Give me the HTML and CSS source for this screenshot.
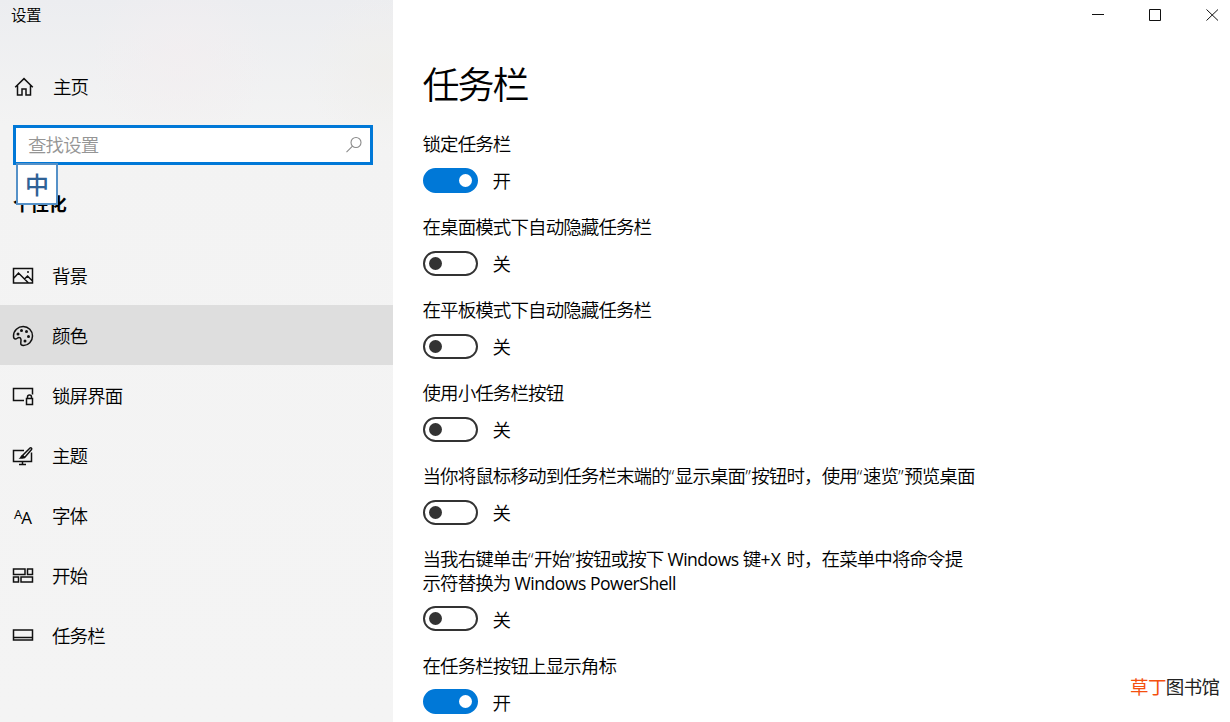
FILE: index.html
```html
<!DOCTYPE html>
<html lang="zh-CN">
<head>
    <meta charset="UTF-8">
    <meta name="viewport" content="width=device-width, initial-scale=1.0">
    <title>设置</title>
    <link rel="stylesheet" href="styles.css">
</head>
<body>
    <div class="window">
        <aside class="sidebar">
            <div class="app-title">设置</div>
            <a class="home">
                <svg class="icon" width="20" height="20" viewBox="0 0 20 20"><path d="M1.200 10.200L10 1.600l8.800 8.600M3.500 8.500v9.500h4.500v-6h4v6h4.500V8.500"/></svg>
                <span>主页</span>
            </a>
            <div class="search">
                <span class="placeholder">查找设置</span>
                <svg class="search-icon" width="18" height="18" viewBox="0 0 18 18"><circle cx="11" cy="6.500" r="5"/><path d="M7.500 10.200L1.500 16.200"/></svg>
                <div class="ime">中</div>
            </div>
            <h2 class="category">个性化</h2>
            <nav class="nav">
                <a class="nav-item">
                    <svg class="icon" width="22" height="18" viewBox="0 0 22 18"><path d="M1.500 1.500h19v14.500h-19zM1.500 11.500l5-5.500 10 10M12.500 12l3-3 5 5"/><circle class="solid" cx="16" cy="5" r="1"/></svg>
                    <span>背景</span>
                </a>
                <a class="nav-item active">
                    <svg class="icon" width="22" height="22" viewBox="0 0 22 22"><path d="M1.500 11C1.500 5.500 6 1.500 11.200 1.500s9.300 4.200 9.300 9.500-4.200 9.500-9 9.500c-2.200 0-3-1-2.700-3 .4-2.500.5-5-1.800-5-1.500 0-2 1.500-3.500 1.500-1.300 0-2-1.300-2-3z"/><g class="solid"><circle cx="6" cy="9" r="1.500"/><circle cx="9.500" cy="5.500" r="1.500"/><circle cx="14.500" cy="6.500" r="1.500"/><circle cx="16.500" cy="11.500" r="1.500"/><circle cx="13" cy="16" r="1.500"/></g></svg>
                    <span>颜色</span>
                </a>
                <a class="nav-item">
                    <svg class="icon" width="22" height="20" viewBox="0 0 22 20"><path d="M12 14.500H1.500v-12h19v6M14.500 12.500h6v6h-6zM15.500 12.500v-1.500a2 2 0 0 1 4 0v1.500"/></svg>
                    <span>锁屏界面</span>
                </a>
                <a class="nav-item">
                    <svg class="icon" width="22" height="20" viewBox="0 0 22 20"><path d="M12 4.500H1.500v11h18v-9M10.500 15.500v3M7 18.500h7"/><path d="M10.500 9.500l7.500-7.500c1-.8 2.300.3 1.500 1.500l-6.800 8z"/><path class="solid" d="M10.500 9c-2 .2-1.800 2.700-4 3.700h4c1.800 0 2.500-1 2.200-2z"/></svg>
                    <span>主题</span>
                </a>
                <a class="nav-item">
                    <span class="icon font-icon"><span class="small-a">A</span><span class="big-a">A</span></span>
                    <span>字体</span>
                </a>
                <a class="nav-item">
                    <svg class="icon" width="22" height="16" viewBox="0 0 22 16"><path d="M1.500 1h11.500v5.500h-11.500zM15.500 1h5v5.500h-5zM1.500 9h5v5h-5zM9 9h11.500v5h-11.500z"/></svg>
                    <span>开始</span>
                </a>
                <a class="nav-item">
                    <svg class="icon" width="22" height="14" viewBox="0 0 22 14"><path d="M1.500 1h19v10h-19zM1.500 8.500h19"/></svg>
                    <span>任务栏</span>
                </a>
            </nav>
        </aside>

        <main class="content">
            <div class="caption-buttons">
                <svg width="13" height="13" viewBox="0 0 13 13"><path d="M0 6.500h12"/></svg>
                <svg width="13" height="13" viewBox="0 0 13 13"><path d="M.5 1.500h11v11H.5z"/></svg>
                <svg width="13" height="13" viewBox="0 0 13 13"><path d="M.5 1.500l11.500 11M12 1.500L.5 12.500"/></svg>
            </div>
            <h1>任务栏</h1>

            <div class="setting">
                <div class="label">锁定任务栏</div>
                <div class="control"><span class="toggle on"></span><span class="state">开</span></div>
            </div>
            <div class="setting">
                <div class="label">在桌面模式下自动隐藏任务栏</div>
                <div class="control"><span class="toggle"></span><span class="state">关</span></div>
            </div>
            <div class="setting">
                <div class="label">在平板模式下自动隐藏任务栏</div>
                <div class="control"><span class="toggle"></span><span class="state">关</span></div>
            </div>
            <div class="setting">
                <div class="label">使用小任务栏按钮</div>
                <div class="control"><span class="toggle"></span><span class="state">关</span></div>
            </div>
            <div class="setting">
                <div class="label">当你将鼠标移动到任务栏末端的<span class="quote">“</span>显示桌面<span class="quote">”</span>按钮时，使用<span class="quote">“</span>速览<span class="quote">”</span>预览桌面</div>
                <div class="control"><span class="toggle"></span><span class="state">关</span></div>
            </div>
            <div class="setting">
                <div class="label">当我右键单击<span class="quote">“</span>开始<span class="quote">”</span>按钮或按下<span class="latin"> Windows </span>键<span class="latin key">+X </span>时，在菜单中将命令提<br>示符替换为<span class="latin"> Windows PowerShell</span></div>
                <div class="control"><span class="toggle"></span><span class="state">关</span></div>
            </div>
            <div class="setting">
                <div class="label">在任务栏按钮上显示角标</div>
                <div class="control"><span class="toggle on"></span><span class="state">开</span></div>
            </div>

            <div class="watermark"><span class="brand">草丁</span>图书馆</div>
        </main>
    </div>
</body>
</html>
```
FILE: styles.css
```css
* {
    box-sizing: border-box;
}

body {
    margin: 0;
    font-family: "Open Sans", "Noto Sans CJK SC", sans-serif;
    font-size: 18.5px;
    font-weight: 350;
    letter-spacing: -0.91px;
    line-height: 24px;
    color: #000;
    background: #fff;
}

.window {
    display: flex;
    height: 722px;
    overflow: hidden;
}

.sidebar {
    width: 393px;
    flex-shrink: 0;
    background:
        radial-gradient(circle at 180px 60px, rgba(243, 238, 240, 0.7), transparent 90px),
        radial-gradient(circle at 385px 70px, rgba(240, 239, 236, 0.8), transparent 80px),
        linear-gradient(#ecedf0, #f3f3f3 125px, #f4f4f4);
}

.app-title {
    height: 30px;
    padding-left: 11px;
    font-size: 15.5px;
    letter-spacing: -0.5px;
    line-height: 30px;
}

.home {
    display: flex;
    align-items: center;
    gap: 19px;
    height: 60px;
    margin-top: 27px;
    padding-left: 14px;
}

svg {
    fill: none;
    stroke: #111;
    stroke-width: 1.5;
}

.solid {
    fill: #111;
    stroke: none;
}

.search {
    position: relative;
    display: flex;
    align-items: center;
    justify-content: space-between;
    width: 360px;
    height: 40px;
    margin: 8px 0 0 13px;
    padding: 0 7px 0 12px;
    border: 3px solid #0078d7;
    background: #fff;
}

.placeholder {
    color: #959595;
}

.search-icon {
    stroke: #8a8a8a;
    stroke-width: 1.1;
}

/* input method indicator hanging under the search box */
.ime {
    position: absolute;
    left: 0;
    top: 35px;
    width: 42px;
    height: 42px;
    border: 2px solid #5591c8;
    background: #fff;
    color: #2f6296;
    font-size: 24px;
    font-weight: 500;
    letter-spacing: 0;
    line-height: 39px;
    text-align: center;
}

.category {
    margin: 27px 0 0 13px;
    font-size: 18.5px;
    font-weight: 700;
    line-height: 24px;
}

.nav {
    margin-top: 29px;
}

.nav-item {
    display: flex;
    align-items: center;
    gap: 18px;
    height: 60px;
    padding: 2px 0 0 12px;
}

.nav-item.active {
    background: #dedede;
}

.nav-item .icon {
    width: 22px;
}

.font-icon {
    display: flex;
    align-items: flex-end;
    padding-left: 2px;
    font-family: "Open Sans", sans-serif;
    font-weight: 400;
    letter-spacing: -1px;
    line-height: 16px;
}

.small-a {
    margin-bottom: 4px;
    font-size: 13px;
}

.big-a {
    font-size: 17px;
}

.content {
    position: relative;
    flex: 1;
    padding-left: 29.5px;
}

.caption-buttons {
    display: flex;
    justify-content: flex-end;
    gap: 44px;
    height: 30px;
    padding: 8px 11px 0 0;
}

.caption-buttons svg {
    stroke-width: 1;
}

h1 {
    margin: 30px 0 23px;
    font-size: 37px;
    font-weight: 350;
    letter-spacing: -2px;
    line-height: 49px;
}

.setting {
    margin-bottom: 22.5px;
}

.label {
    margin-bottom: 12px;
    line-height: 23.5px;
    white-space: nowrap;
}

.latin {
    font-size: 17.6px;
    font-weight: 400;
    letter-spacing: -0.5px;
    line-height: 1;
}

.latin.key {
    letter-spacing: 0.4px;
}

.quote {
    letter-spacing: 0.5px;
}

.control {
    display: flex;
    align-items: center;
    gap: 14.5px;
    height: 25px;
    margin-left: 0.5px;
}

.state {
    padding-top: 2px;
}

.toggle {
    display: flex;
    align-items: center;
    width: 55px;
    height: 25px;
    padding: 0 4px;
    border: 2px solid #333;
    border-radius: 13px;
}

.toggle::before {
    content: "";
    width: 13px;
    height: 13px;
    border-radius: 50%;
    background: #333;
}

.toggle.on {
    justify-content: flex-end;
    border-color: #0078d7;
    background: #0078d7;
}

.toggle.on::before {
    background: #fff;
}

.watermark {
    position: absolute;
    right: 10.5px;
    bottom: 23px;
    color: #222;
    font-weight: 400;
    letter-spacing: -0.6px;
}

.brand {
    color: #f4500f;
}
```
